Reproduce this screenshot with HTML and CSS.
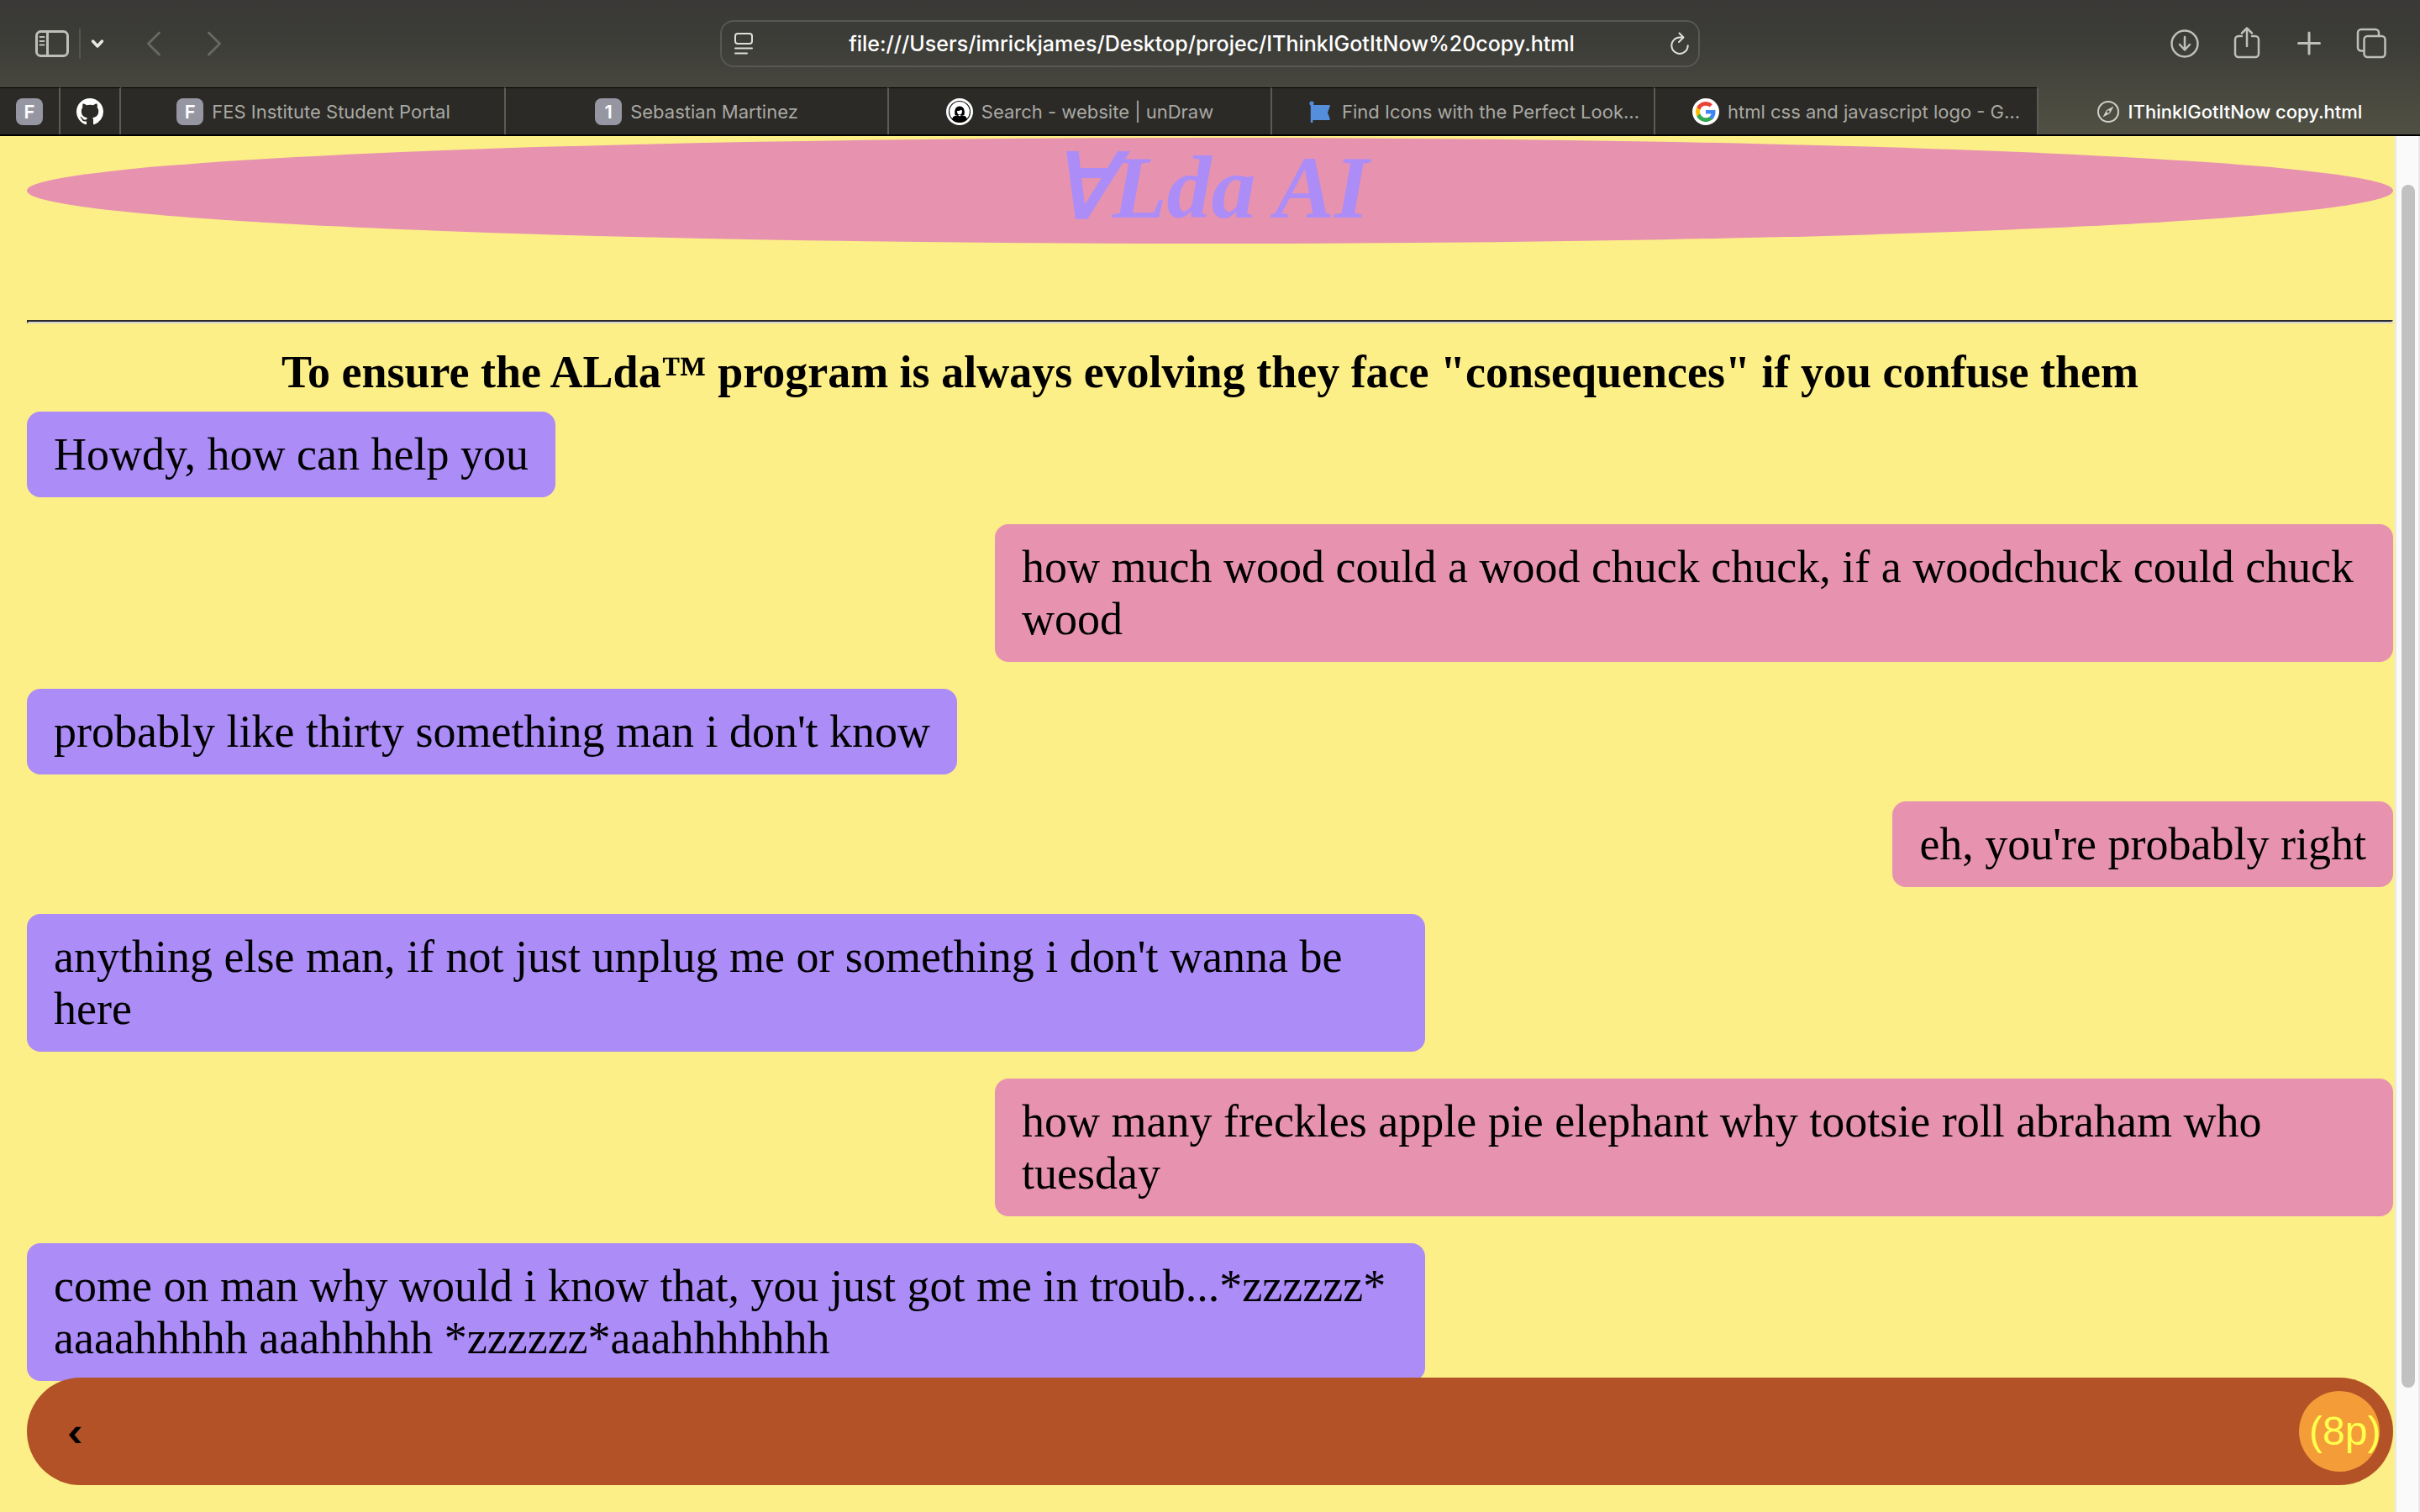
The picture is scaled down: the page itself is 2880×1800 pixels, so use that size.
FILE: index.html
```html
<!DOCTYPE html>
<html lang="en">
<head>
<meta charset="utf-8">
<title>IThinkIGotItNow copy.html</title>
<link rel="stylesheet" href="styles.css">
</head>
<body>
<header class="chrome">
  <div class="toolbar">
    <div class="tools tools-left">
      <button class="tool sidebar-btn" aria-label="Show sidebar">
        <svg width="40" height="32" viewBox="0 0 40 32" fill="none" stroke="#bfbfba" stroke-width="3"><rect x="1.5" y="1.5" width="37" height="29" rx="5"/><path d="M14.5 2v28"/><path d="M5.500 8h5M5.500 13h5M5.500 17.500h5" stroke-width="2" stroke-linecap="round"/></svg>
      </button>
      <span class="divider"></span>
      <button class="tool menu-btn" aria-label="Tab groups">
        <svg width="16" height="12" viewBox="0 0 16 12" fill="none" stroke="#e8e8e4" stroke-width="3.500" stroke-linecap="round" stroke-linejoin="round"><path d="M2.500 3 8 9l5.500-6"/></svg>
      </button>
      <button class="tool back-btn" aria-label="Back">
        <svg width="18" height="32" viewBox="0 0 18 32" fill="none" stroke="#676763" stroke-width="3" stroke-linecap="round" stroke-linejoin="round"><path d="M15.500 3 2.500 16l13 13"/></svg>
      </button>
      <button class="tool" aria-label="Forward">
        <svg width="18" height="32" viewBox="0 0 18 32" fill="none" stroke="#676763" stroke-width="3" stroke-linecap="round" stroke-linejoin="round"><path d="m2.500 3 13 13-13 13"/></svg>
      </button>
    </div>
    <div class="address">
      <button class="tool" aria-label="Page settings">
        <svg width="24" height="28" viewBox="0 0 24 28" fill="none" stroke="#dededa" stroke-width="2" stroke-linecap="round"><rect x="2" y="2" width="20" height="12" rx="3"/><path d="M2 19.500h20M2 25.500h14"/></svg>
      </button>
      <input class="url" aria-label="Address" value="file:///Users/imrickjames/Desktop/projec/IThinkIGotItNow%20copy.html">
      <button class="tool" aria-label="Reload">
        <svg width="24" height="28" viewBox="0 0 24 28" fill="none" stroke="#dededa" stroke-width="2" stroke-linecap="round" stroke-linejoin="round"><path d="M15.500 6.500H12a9.700 9.700 0 1 0 9.700 9.700M11.500 1.500l5 5-5.500 5.500"/></svg>
      </button>
    </div>
    <div class="tools tools-right">
      <button class="tool" aria-label="Downloads">
        <svg width="36" height="40" viewBox="0 0 36 40" fill="none" stroke="#bfbfba" stroke-width="2.500" stroke-linecap="round" stroke-linejoin="round"><circle cx="18" cy="20" r="15.500"/><path d="M18 12v15M12 21l6 6.500 6-6.500"/></svg>
      </button>
      <button class="tool" aria-label="Share">
        <svg width="36" height="40" viewBox="0 0 36 40" fill="none" stroke="#bfbfba" stroke-width="2.500" stroke-linecap="round" stroke-linejoin="round"><path d="M12 11H8a4 4 0 0 0-4 4v17a4 4 0 0 0 4 4h20a4 4 0 0 0 4-4V15a4 4 0 0 0-4-4h-4M18 23V1.500M12 7.500l6-6 6 6"/></svg>
      </button>
      <button class="tool" aria-label="New tab">
        <svg width="36" height="40" viewBox="0 0 36 40" fill="none" stroke="#bfbfba" stroke-width="3" stroke-linecap="round"><path d="M18 7v25M5.500 19.500h25"/></svg>
      </button>
      <button class="tool" aria-label="Tab overview">
        <svg width="36" height="40" viewBox="0 0 36 40" fill="none" stroke="#bfbfba" stroke-width="2.500"><rect x="9.500" y="11" width="25" height="25" rx="4"/><path d="M9 28.500H6a4 4 0 0 1-4-4V7a4 4 0 0 1 4-4h17a4 4 0 0 1 4 4v3.500"/></svg>
      </button>
    </div>
  </div>
  <nav class="tabs">
    <a class="tab pinned" href="#" aria-label="FES"><span class="badge">F</span></a>
    <a class="tab pinned" href="#" aria-label="GitHub">
      <svg width="32" height="32" viewBox="0 0 16 16" fill="#fff"><path d="M8 0C3.580 0 0 3.580 0 8c0 3.540 2.290 6.530 5.470 7.590.4.070.55-.17.55-.38 0-.19-.01-.82-.01-1.490-2.010.37-2.530-.49-2.690-.94-.09-.23-.48-.94-.82-1.130-.28-.15-.68-.52-.01-.53.63-.01 1.080.58 1.230.82.72 1.210 1.870.87 2.330.66.07-.52.28-.87.51-1.070-1.780-.2-3.640-.89-3.640-3.950 0-.87.31-1.590.82-2.150-.08-.2-.36-1.020.08-2.120 0 0 .67-.21 2.200.82.640-.18 1.320-.27 2-.27s1.360.09 2 .27c1.530-1.040 2.200-.82 2.200-.82.44 1.100.16 1.920.08 2.120.51.56.82 1.270.82 2.150 0 3.070-1.870 3.750-3.650 3.950.29.25.54.73.54 1.480 0 1.070-.01 1.930-.01 2.200 0 .21.15.46.55.38A8.010 8.010 0 0 0 16 8c0-4.420-3.580-8-8-8z"/></svg>
    </a>
    <a class="tab" href="#"><span class="badge">F</span><span class="label">FES Institute Student Portal</span></a>
    <a class="tab" href="#"><span class="badge">1</span><span class="label">Sebastian Martinez</span></a>
    <a class="tab" href="#">
      <svg width="32" height="32" viewBox="0 0 32 32"><circle cx="16" cy="16" r="16" fill="#fff"/><circle cx="16" cy="16" r="12.500" fill="none" stroke="#111" stroke-width="1.200"/><path d="M10.500 20c-1-5 0-10.500 5.500-10.500S22.500 15 21.500 20z" fill="#000"/><path d="M13 15c2 0 4-.5 5-1.500l1 1.500c0 3-1.200 4.500-3 4.500S13 18 13 15z" fill="#fff"/><path d="M7 25c1-4 4-4.500 7-5l2 1.500 2-1.500c3 .5 6 1 7 5a12.500 12.500 0 0 1-18 0z" fill="#000"/></svg>
      <span class="label">Search - website | unDraw</span></a>
    <a class="tab long" href="#">
      <svg width="32" height="32" viewBox="0 0 32 32" fill="#558fdb"><circle cx="6" cy="6" r="2.600"/><path d="M4.800 6h2.600v23H4.800z"/><path d="M6 8h21a1 1 0 0 1 .8 1.400L25 17l2.800 7.800A1 1 0 0 1 27 26H6z"/></svg>
      <span class="label">Find Icons with the Perfect Look…</span></a>
    <a class="tab long" href="#">
      <svg width="32" height="32" viewBox="0 0 32 32"><circle cx="16" cy="16" r="16" fill="#fff"/><g transform="translate(4 4)"><path fill="#4285f4" d="M23.500 12.300c0-.9-.1-1.500-.2-2.300H12v4.600h6.500c-.3 1.500-1.200 2.800-2.400 3.600v3h3.900c2.200-2.100 3.500-5.200 3.500-8.900z"/><path fill="#34a853" d="M12 24c3.200 0 6-1.100 8-2.900l-3.900-3c-1.100.7-2.500 1.200-4.100 1.200-3.100 0-5.800-2.100-6.700-5H1.300v3.100C3.300 21.300 7.300 24 12 24z"/><path fill="#fbbc05" d="M5.300 14.300a7.200 7.200 0 0 1 0-4.600V6.600h-4a12 12 0 0 0 0 10.800z"/><path fill="#ea4335" d="M12 4.800c1.800 0 3.300.6 4.600 1.800l3.400-3.400A12 12 0 0 0 1.300 6.600l4 3.100c.9-2.900 3.600-4.900 6.700-4.900z"/></g></svg>
      <span class="label">html css and javascript logo - G…</span></a>
    <a class="tab active" href="#" aria-current="page">
      <svg width="28" height="28" viewBox="0 0 28 28"><circle cx="14" cy="14" r="12" fill="none" stroke="#cfcfc8" stroke-width="2"/><path fill="#cfcfc8" fill-rule="evenodd" d="M20.500 7.500 16 16l-8.500 4.500L12 12zM14 12.300a1.700 1.700 0 1 0 0 3.400 1.700 1.700 0 0 0 0-3.400z"/></svg>
      <span class="label">IThinkIGotItNow copy.html</span></a>
  </nav>
</header>
<div class="viewport">
  <main class="page">
    <h1 class="title">∀Lda AI</h1>
    <hr class="rule">
    <h2 class="notice">To ensure the ALda™ program is always evolving they face "consequences" if you confuse them</h2>
    <section class="chat">
      <p class="bubble bot">Howdy, how can help you</p>
      <p class="bubble user">how much wood could a wood chuck chuck, if a woodchuck could chuck wood</p>
      <p class="bubble bot">probably like thirty something man i don't know</p>
      <p class="bubble user">eh, you're probably right</p>
      <p class="bubble bot">anything else man, if not just unplug me or something i don't wanna be here</p>
      <p class="bubble user">how many freckles apple pie elephant why tootsie roll abraham who tuesday</p>
      <p class="bubble bot">come on man why would i know that, you just got me in troub...*zzzzzz* aaaahhhhh aaahhhhh *zzzzzz*aaahhhhhhh</p>
    </section>
    <form class="composer">
      <input class="message" aria-label="Message" value="‹">
      <button class="send" type="button">(8p)</button>
    </form>
  </main>
  <div class="scrollbar"><div class="thumb"></div></div>
</div>
</body>
</html>
```
FILE: styles.css
```css
* {
  box-sizing: border-box;
}

body {
  margin: 0;
  height: 100vh;
  display: flex;
  flex-direction: column;
  overflow: hidden;
  background: #fdef87;
}

button,
input {
  border: 0;
  margin: 0;
  padding: 0;
  background: none;
  outline: none;
}

svg {
  display: block;
  flex: none;
}

/* Browser window */
.chrome {
  flex: none;
  font-family: Inter, "Liberation Sans", sans-serif;
  background: linear-gradient(#3a3937, #3b3b37 25%, #47473e 65%, #515043);
  border-bottom: 2px solid #000;
}

.toolbar {
  height: 104px;
  display: grid;
  grid-template-columns: 1fr minmax(0, 1166px) 1fr;
  align-items: center;
}

.tools {
  display: flex;
  align-items: center;
}

.tools-left {
  padding-left: 42px;
}

.tools-right {
  justify-content: flex-end;
  gap: 38px;
  padding-right: 40px;
}

.divider {
  width: 2px;
  height: 36px;
  margin: 0 12px;
  background: #555550;
}

.back-btn {
  margin: 0 54px 0 50px;
}

.address {
  display: flex;
  align-items: center;
  height: 56px;
  padding: 0 10px 0 14px;
  border: 2px solid #575753;
  border-radius: 16px;
}

.url {
  flex: 1;
  min-width: 0;
  text-align: center;
  font: 500 25px/32px Inter, "Liberation Sans", sans-serif;
  color: #fff;
}

.tabs {
  display: grid;
  grid-template-columns: 72px 72px repeat(6, minmax(0, 1fr));
  height: 56px;
}

.tab {
  display: flex;
  align-items: center;
  justify-content: center;
  gap: 10px;
  background: #2b2a26;
  border-top: 1px solid #000;
  border-left: 2px solid #5c5b54;
  color: #a9a9a4;
  font-size: 22px;
  line-height: 28px;
  text-decoration: none;
}

.tab.pinned {
  border-left: 0;
  border-right: 2px solid #5c5b54;
}

.pinned + .tab {
  border-left-color: #2b2a26;
}

.tab.long {
  padding-left: 24px;
}

.tab.active {
  background: none;
  border-top-color: transparent;
  color: #fff;
  font-weight: 500;
}

.label {
  white-space: nowrap;
}

.badge {
  width: 32px;
  height: 32px;
  border-radius: 8px;
  background: #9696a3;
  color: #fff;
  font-weight: 600;
  line-height: 32px;
  text-align: center;
}

/* Web page */
.viewport {
  flex: 1;
  min-height: 0;
  display: flex;
}

.page {
  flex: 1;
  min-width: 0;
  position: relative;
  padding: 2px 2px 0 32px;
  overflow: hidden;
  font: 54px/62px "Liberation Serif", serif;
  color: #000;
}

.title {
  margin: 0 0 91px;
  padding-bottom: 6px;
  border-radius: 50%;
  background: #e793b0;
  color: #ac8cf7;
  font-size: 106px;
  line-height: 120px;
  font-style: italic;
  text-align: center;
}

.rule {
  margin: 0 0 27px;
  border: 2px solid;
  border-color: #2c2c2c #d4d4d4 #d4d4d4 #2c2c2c;
}

.notice {
  margin: 0 0 16px;
  font-size: 54px;
  text-align: center;
}

.chat {
  display: flex;
  flex-direction: column;
  align-items: flex-start;
  gap: 32px;
}

.bubble {
  max-width: 1664px;
  margin: 0;
  padding: 20px 32px;
  border-radius: 16px;
}

.bot {
  background: #ac8cf7;
}

.user {
  align-self: flex-end;
  background: #e793b0;
}

.composer {
  position: absolute;
  left: 32px;
  right: 2px;
  bottom: 32px;
  display: flex;
  align-items: center;
  height: 128px;
  padding: 0 16px 0 48px;
  border-radius: 64px;
  background: #b35227;
}

.message {
  flex: 1;
  min-width: 0;
  padding-top: 4px;
  font: bold 42px/56px Inter, "Liberation Sans", sans-serif;
  color: #000;
}

.send {
  width: 96px;
  height: 96px;
  padding-left: 12px;
  border-radius: 50%;
  background: #f39c38;
  color: #ffff4f;
  font: 48px/56px "Liberation Sans", sans-serif;
  text-align: left;
  white-space: nowrap;
}

.scrollbar {
  flex: none;
  width: 30px;
  padding: 58px 4px 148px 6px;
  border: solid #e8e8e8;
  border-width: 0 2px;
  background: #fafafa;
}

.thumb {
  width: 16px;
  height: 100%;
  border-radius: 8px;
  background: #c1c1c1;
}
```
